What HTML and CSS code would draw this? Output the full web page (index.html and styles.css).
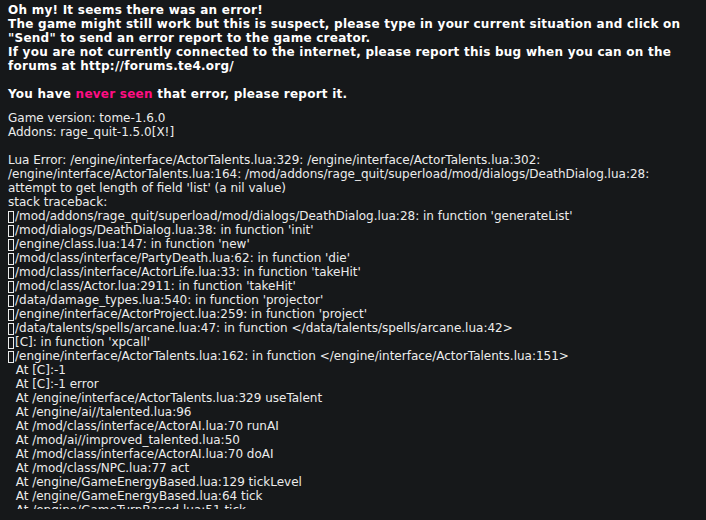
FILE: index.html
```html
<!DOCTYPE html>
<html lang="en">
<head>
    <meta charset="UTF-8">
    <title>Lua Error</title>
    <link rel="stylesheet" href="styles.css">
</head>
<body>
    <div class="dialog">
        <div class="intro">Oh my! It seems there was an error!
The game might still work but this is suspect, please type in your current situation and click on
"Send" to send an error report to the game creator.
If you are not currently connected to the internet, please report this bug when you can on the
forums at http://forums.te4.org/

You have <span class="seen">never seen</span> that error, please report it.</div>

        <div class="trace">Game version: tome-1.6.0
Addons: rage_quit-1.5.0[X!]

Lua Error: /engine/interface/ActorTalents.lua:329: /engine/interface/ActorTalents.lua:302:
/engine/interface/ActorTalents.lua:164: /mod/addons/rage_quit/superload/mod/dialogs/DeathDialog.lua:28:
attempt to get length of field 'list' (a nil value)
stack traceback:
<span class="nog"></span>/mod/addons/rage_quit/superload/mod/dialogs/DeathDialog.lua:28: in function 'generateList'
<span class="nog"></span>/mod/dialogs/DeathDialog.lua:38: in function 'init'
<span class="nog"></span>/engine/class.lua:147: in function 'new'
<span class="nog"></span>/mod/class/interface/PartyDeath.lua:62: in function 'die'
<span class="nog"></span>/mod/class/interface/ActorLife.lua:33: in function 'takeHit'
<span class="nog"></span>/mod/class/Actor.lua:2911: in function 'takeHit'
<span class="nog"></span>/data/damage_types.lua:540: in function 'projector'
<span class="nog"></span>/engine/interface/ActorProject.lua:259: in function 'project'
<span class="nog"></span>/data/talents/spells/arcane.lua:47: in function &lt;/data/talents/spells/arcane.lua:42&gt;
<span class="nog"></span>[C]: in function 'xpcall'
<span class="nog"></span>/engine/interface/ActorTalents.lua:162: in function &lt;/engine/interface/ActorTalents.lua:151&gt;
  At [C]:-1
  At [C]:-1 error
  At /engine/interface/ActorTalents.lua:329 useTalent
  At /engine/ai//talented.lua:96
  At /mod/class/interface/ActorAI.lua:70 runAI
  At /mod/ai//improved_talented.lua:50
  At /mod/class/interface/ActorAI.lua:70 doAI
  At /mod/class/NPC.lua:77 act
  At /engine/GameEnergyBased.lua:129 tickLevel
  At /engine/GameEnergyBased.lua:64 tick
  At /engine/GameTurnBased.lua:51 tick
  At /mod/class/Game.lua:1000 tick
  At [C]:-1</div>
    </div>
</body>
</html>
```

FILE: styles.css
```css
body {
    margin: 0;
    background-color: #16181a;
    font-family: "DejaVu Sans", sans-serif;
    font-size: 12px;
    line-height: 14px;
    color: #ececec;
}

.dialog {
    height: 509px;
    overflow: hidden;
    padding: 3px 0 0 8px;
    box-sizing: border-box;
}

.intro {
    white-space: pre;
    font-weight: bold;
    letter-spacing: 0.25px;
    color: #fff;
    margin-bottom: 10px;
}

.seen {
    color: #ff0d84;
}

.trace {
    white-space: pre;
}

.nog {
    display: inline-block;
    width: 4px;
    height: 10px;
    border: 1px solid #ececec;
    margin-right: 1px;
    vertical-align: -3px;
}
```
